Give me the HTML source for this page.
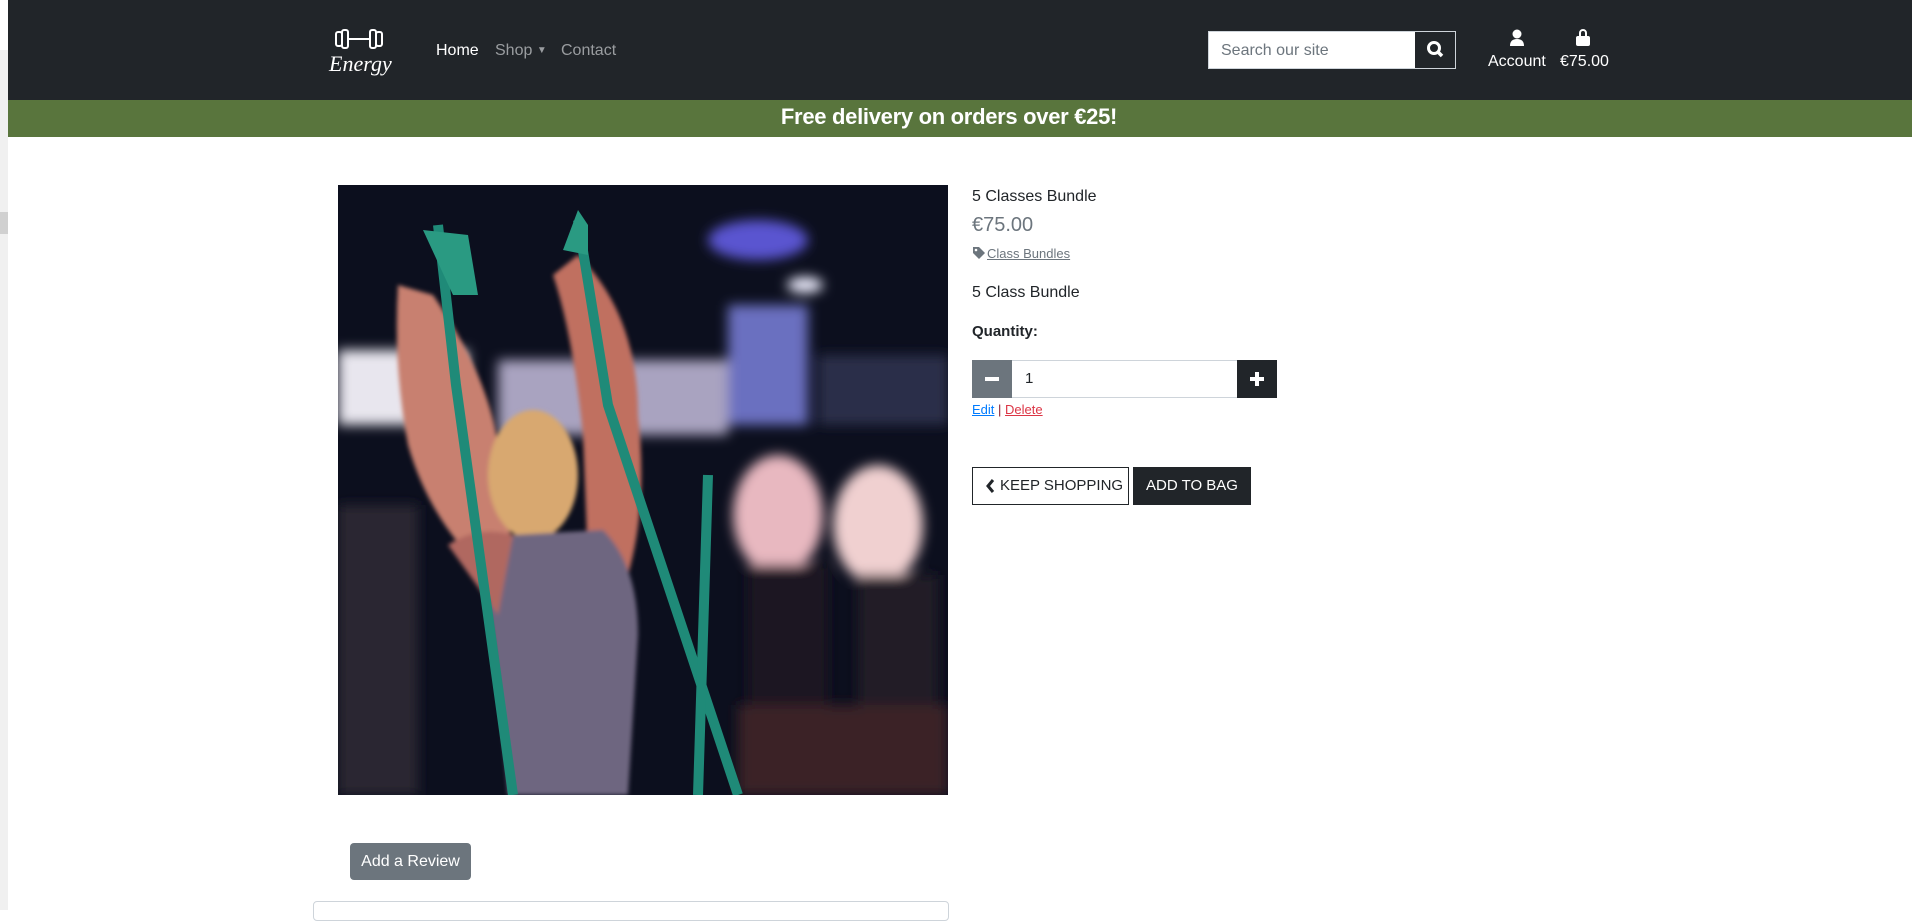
<!DOCTYPE html>
<html><head><meta charset="utf-8"><style>
*{margin:0;padding:0;box-sizing:border-box}
body{width:1912px;height:910px;overflow:hidden;background:#fff;font-family:"Liberation Sans",sans-serif;position:relative}
.abs{position:absolute;white-space:nowrap}
nav{position:absolute;left:8px;top:0;width:1904px;height:100px;background:#212529}
.banner{position:absolute;left:8px;top:100px;width:1904px;height:37px;background:#59753d;color:#fff;font-size:22px;font-weight:bold;text-align:center;line-height:34px;letter-spacing:-0.3px;padding-right:22px}
.navl{position:absolute;top:42px;font-size:16px;color:#9a9da0}
</style></head><body>
<div class="abs" style="left:0;top:50px;width:8px;height:860px;background:#f0f0f0"></div>
<div class="abs" style="left:0;top:212px;width:8px;height:22px;background:#d0d0d0"></div>
<nav></nav>
<div class="abs" style="left:332px;top:28px;width:60px;height:46px;color:#fff">
<svg width="60" height="22" viewBox="0 0 60 22"><g fill="none" stroke="#fff" stroke-width="2"><rect x="4" y="4" width="6" height="14" rx="2"/><rect x="10" y="2" width="6" height="18" rx="2"/><line x1="16" y1="11" x2="38" y2="11"/><rect x="38" y="2" width="6" height="18" rx="2"/><rect x="44" y="4" width="6" height="14" rx="2"/></g></svg>
<div style="font-family:'Liberation Serif',serif;font-style:italic;font-size:22px;line-height:22px;margin-top:-2px;margin-left:-3px">Energy</div></div>
<div class="navl" style="left:436px;color:#fff">Home</div>
<div class="navl" style="left:495px">Shop <span style="font-size:10px;vertical-align:2px">▼</span></div>
<div class="navl" style="left:561px">Contact</div>
<div class="abs" style="left:1208px;top:31px;width:248px;height:38px;border:1px solid #ced4da;background:#fff"></div>
<div class="abs" style="left:1221px;top:42px;font-size:16px;color:#6c757d">Search our site</div>
<div class="abs" style="left:1415px;top:32px;width:40px;height:36px;background:#212529"><svg width="40" height="36"><circle cx="19" cy="16" r="5.5" fill="none" stroke="#fff" stroke-width="3"/><line x1="23" y1="20" x2="27" y2="24" stroke="#fff" stroke-width="3.5"/></svg></div>
<svg class="abs" style="left:1509px;top:29px" width="16" height="18"><circle cx="8" cy="5" r="4.5" fill="#fff"/><path d="M1 17 Q1 10 8 10 Q15 10 15 17Z" fill="#fff"/></svg>
<div class="abs" style="left:1488px;top:53px;color:#fff;font-size:16px">Account</div>
<svg class="abs" style="left:1575px;top:29px" width="16" height="18"><path d="M5 7V4a3 3 0 0 1 6 0v3" fill="none" stroke="#fff" stroke-width="2"/><rect x="1" y="7" width="14" height="10" rx="2" fill="#fff"/></svg>
<div class="abs" style="left:1560px;top:53px;color:#fff;font-size:16px">€75.00</div>
<div class="banner">Free delivery on orders over €25!</div>

<svg class="abs" style="left:338px;top:185px" width="610" height="610" viewBox="0 0 610 610">
<defs><filter id="b"><feGaussianBlur stdDeviation="6"/></filter><filter id="b2"><feGaussianBlur stdDeviation="2"/></filter></defs>
<rect width="610" height="610" fill="#0c0f1e"/>
<g filter="url(#b)">
<rect x="0" y="165" width="130" height="75" fill="#e8e6ee"/>
<rect x="160" y="175" width="230" height="75" fill="#a9a3c0"/>
<rect x="390" y="120" width="80" height="120" fill="#6a70c0"/>
<ellipse cx="420" cy="55" rx="50" ry="20" fill="#5a55d0"/>
<ellipse cx="467" cy="100" rx="18" ry="8" fill="#eef"/>
<rect x="480" y="170" width="130" height="70" fill="#2a2f4a"/>
<rect x="0" y="320" width="80" height="290" fill="#2a2630"/>
<ellipse cx="440" cy="330" rx="45" ry="60" fill="#e8b8c0"/>
<ellipse cx="540" cy="340" rx="45" ry="60" fill="#f0d0d0"/>
<rect x="410" y="380" width="80" height="150" fill="#1a1520"/>
<rect x="520" y="390" width="80" height="150" fill="#201a25"/>
<rect x="400" y="520" width="210" height="90" fill="#3a2228"/>
</g>
<g filter="url(#b2)">
<path d="M60 100 Q55 180 70 260 Q90 330 140 380 L175 370 L160 260 Q150 190 95 110Z" fill="#c88070"/>
<path d="M240 70 Q300 130 300 230 Q310 320 290 390 L250 380 L245 250 Q235 150 215 90Z" fill="#c07060"/>
<ellipse cx="195" cy="290" rx="45" ry="65" fill="#d8a870"/>
<path d="M175 350 L265 345 Q300 380 300 450 L290 610 L170 610 Q160 480 150 420Z" fill="#6e6680"/>
<path d="M110 360 Q140 340 175 350 L160 430Z" fill="#b06860"/>
</g>
<g stroke="#1f8a78" stroke-width="10" fill="none">
<path d="M100 40 L118 200 L175 610"/>
<path d="M240 35 L270 220 L400 610"/>
<path d="M370 290 L360 610"/>
</g>
<path d="M85 45 L130 50 L140 110 L115 110Z" fill="#2a9a82"/>
<path d="M240 25 L225 65 L250 70 L250 40Z" fill="#2a9a82"/>
</svg>

<div class="abs" style="left:972px;top:188px;font-size:16px;color:#212529">5 Classes Bundle</div>
<div class="abs" style="left:972px;top:214px;font-size:20px;color:#6c757d">€75.00</div>
<svg class="abs" style="left:972px;top:246px" width="14" height="14"><path d="M1 1h6l6 6-6 6-6-6z" fill="#6c757d"/><circle cx="4" cy="4" r="1.3" fill="#fff"/></svg>
<div class="abs" style="left:987px;top:246px;font-size:13px;color:#6c757d;text-decoration:underline">Class Bundles</div>
<div class="abs" style="left:972px;top:284px;font-size:16px;color:#212529">5 Class Bundle</div>
<div class="abs" style="left:972px;top:323px;font-size:15px;font-weight:bold;color:#212529">Quantity:</div>
<div class="abs" style="left:972px;top:360px;width:305px;height:38px;border:1px solid #ced4da;background:#fff"></div>
<div class="abs" style="left:972px;top:360px;width:40px;height:38px;background:#6c757d"><div style="position:absolute;left:13px;top:17px;width:14px;height:4px;background:#fff"></div></div>
<div class="abs" style="left:1237px;top:360px;width:40px;height:38px;background:#212529"><div style="position:absolute;left:13px;top:17px;width:14px;height:4px;background:#fff"></div><div style="position:absolute;left:18px;top:12px;width:4px;height:14px;background:#fff"></div></div>
<div class="abs" style="left:1025px;top:370px;font-size:15px;color:#212529">1</div>
<div class="abs" style="left:972px;top:402px;font-size:13px"><span style="color:#007bff;text-decoration:underline">Edit</span> <span style="color:#8a1c2c">|</span> <span style="color:#dc3545;text-decoration:underline">Delete</span></div>
<div class="abs" style="left:972px;top:467px;width:157px;height:38px;border:1.5px solid #212529;font-size:15px;color:#212529;line-height:35px;padding-left:27px">KEEP SHOPPING</div>
<svg class="abs" style="left:985px;top:478px" width="10" height="16"><path d="M8 2L3 8l5 6" fill="none" stroke="#212529" stroke-width="3"/></svg>
<div class="abs" style="left:1133px;top:467px;width:118px;height:38px;background:#212529;font-size:15px;color:#fff;line-height:38px;text-align:center">ADD TO BAG</div>
<div class="abs" style="left:350px;top:843px;width:121px;height:37px;background:#6c757d;border-radius:4px;color:#fff;font-size:16px;line-height:37px;text-align:center">Add a Review</div>
<div class="abs" style="left:313px;top:901px;width:636px;height:20px;border:1px solid #ced4da;border-radius:4px"></div>
</body></html>
